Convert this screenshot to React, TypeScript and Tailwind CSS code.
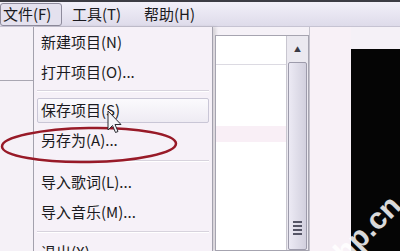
import React from 'react';

const items: (string | null)[] = [
	'新建项目(N)',
	'打开项目(O)...',
	null,
	'保存项目(S)',
	'另存为(A)...',
	null,
	'导入歌词(L)...',
	'导入音乐(M)...',
	null,
	'退出(X)',
];

function MenuItem({ label, hot }: { label: string; hot?: boolean }) {
	return (
		<div className="flex h-[30px] items-center px-[3px]">
			<div
				className={
					hot
						? 'flex h-[25px] w-full items-center rounded-[2px] border border-[#c9c6d6] bg-gradient-to-b from-[#fbfafd] to-[#eeebf3] pl-[3px]'
						: 'flex h-[25px] w-full items-center border border-transparent pl-[3px]'
				}
			>
				{label}
			</div>
		</div>
	);
}

function Separator({ h }: { h: string }) {
	return (
		<div className={`flex flex-col justify-center px-[3px] ${h}`}>
			<div className="border-t border-[#d7d3dd]" />
			<div className="border-t border-white" />
		</div>
	);
}

export default function App() {
	return (
		<div
			className="relative flex h-[251px] w-[400px] flex-col overflow-hidden
				bg-[#f5f1f7] text-[15px] text-[#1a1a20]"
			style={{ fontFamily: '"Noto Sans CJK SC", "Noto Sans", sans-serif' }}
		>
			<div className="h-[2px] bg-[#3c3c44]" />

			{/* menu bar */}
			<div
				className="flex h-[25px] items-end border-b border-[#c6c3d2]
					bg-gradient-to-b from-[#f2f0f9] to-[#dedbea]"
			>
				<div
					className="flex h-[23px] w-[62px] items-center rounded-[3px]
						border border-[#8e8b9c] bg-[#e4e1ee] pl-[2px]"
				>
					文件(F)
				</div>
				<div className="flex h-[23px] w-[72px] items-center pl-[10px]">
					工具(T)
				</div>
				<div className="flex h-[23px] items-center pl-[10px]">帮助(H)</div>
			</div>

			<div className="flex min-h-0 flex-1">
				{/* window behind, left edge */}
				<div className="flex w-[33px] flex-col">
					<div className="h-[53px]" />
					<div className="border-t border-[#a9a7b2]" />
				</div>

				{/* dropdown */}
				<div
					className="w-[180px] border-x border-[#a3a1ad] bg-[#f6f1f8]
						shadow-[3px_0_3px_rgba(0,0,0,0.12)]"
				>
					{items.map((it, i) =>
						it === null ? (
							<Separator
								key={i}
								h={i === 5 ? 'h-[12px]' : i === 2 ? 'h-[8px]' : 'h-[10px]'}
							/>
						) : (
							<MenuItem hot={i === 3} key={i} label={it} />
						),
					)}
				</div>

				{/* window behind, right side */}
				<div className="flex flex-1">
					<div className="ml-[2px] mt-[8px] flex w-[94px] border border-[#a6a4b0]">
						<div className="flex w-[70px] flex-col bg-white">
							<div className="h-[29px] border-b border-[#dcdae2]" />
							<div className="h-[61px]" />
							<div className="h-[16px] bg-[#f9eff6]" />
						</div>
						<div className="flex w-[22px] flex-col border-l border-[#c8c6d0] bg-[#ebe9f0]">
							<div className="flex h-[26px] items-center justify-center text-[7px] text-[#3a3a44]">
								▲
							</div>
							<div
								className="mx-[1px] flex flex-1 flex-col items-center justify-end
									rounded-[2px] border border-[#9d9bab] bg-gradient-to-r
									from-[#eceaf4] to-[#d2d0de] pb-[14px]"
							>
								<div className="mb-[2px] h-[2px] w-[9px] bg-[#555566]" />
								<div className="mb-[2px] h-[2px] w-[9px] bg-[#555566]" />
								<div className="mb-[2px] h-[2px] w-[9px] bg-[#555566]" />
								<div className="h-[2px] w-[9px] bg-[#555566]" />
							</div>
						</div>
					</div>
					<div className="w-[42px] border-l border-[#c4c2cc] bg-[#f8f1f7]" />
					<div className="mt-[22px] flex-1 bg-[#050505]" />
				</div>
			</div>

			{/* red annotation ellipse */}
			<svg
				className="pointer-events-none absolute left-0 top-0"
				height="251"
				width="400"
			>
				<ellipse
					cx="89"
					cy="145"
					fill="none"
					rx="87"
					ry="17"
					stroke="#981a28"
					strokeWidth="2.5"
					transform="rotate(-1 89 145)"
				/>
				{/* mouse cursor */}
				<path
					d="M108 111 L108 130 L112.5 125.5 L115.5 132.5 L118 131.5 L115 124.5 L121 124.5 Z"
					fill="#f4f4f8"
					stroke="#2a2a30"
					strokeWidth="1"
				/>
			</svg>

			{/* watermark */}
			<div
				className="pointer-events-none absolute left-[326px] top-[255px]
					origin-left -rotate-45 text-[30px] font-bold leading-none
					text-white/85"
				style={{ fontFamily: '"Liberation Sans", Arial, sans-serif' }}
			>
				php.cn
			</div>
		</div>
	);
}
